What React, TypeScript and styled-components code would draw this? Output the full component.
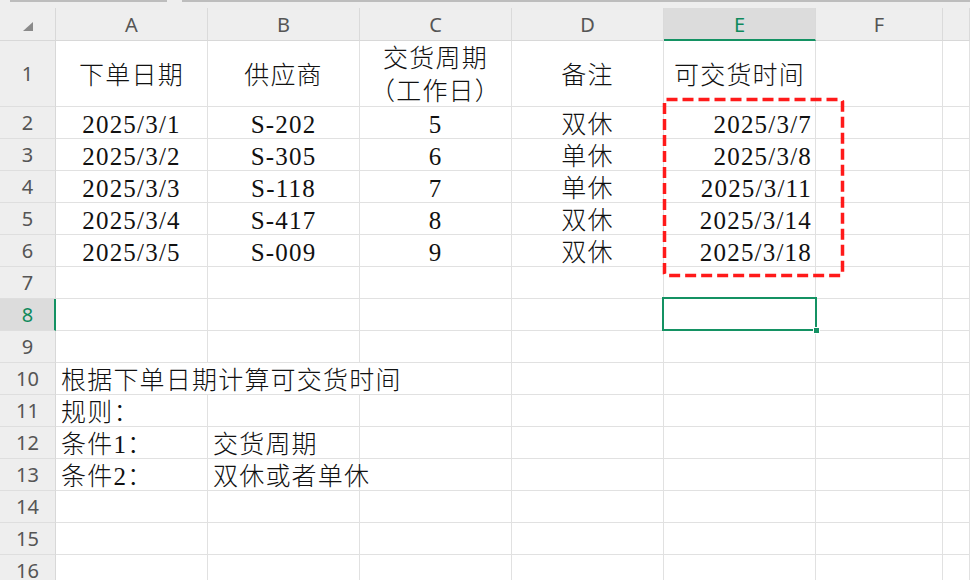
import React from "react";
import styled, { createGlobalStyle, css } from "styled-components";

const GlobalStyle = createGlobalStyle`
  html, body {
    margin: 0;
    padding: 0;
    background: #ffffff;
    overflow: hidden;
  }
`;

const GREEN = "#149263";
const GRID = "#e1e1e1";
const HEAD_BG = "#eeeeee";

const Sheet = styled.div`
  position: relative;
  width: 970px;
  height: 580px;
  overflow: hidden;
  background: #fff;
`;

const TopStrip = styled.div`
  height: 8px;
  background: ${HEAD_BG};
  display: flex;
  align-items: flex-start;
`;

const TabEdge = styled.div<{ $w: number; $gap?: boolean }>`
  width: ${(p) => p.$w}px;
  flex: ${(p) => (p.$w ? "none" : "1")};
  height: 2px;
  background: ${(p) => (p.$gap ? "transparent" : "#bdbdbd")};
`;

const Grid = styled.div`
  display: grid;
  grid-template-columns: 56px repeat(5, 152px) 127px 1fr;
  grid-template-rows: 33px 66px;
  grid-auto-rows: 32px;
`;

const headBase = css`
  box-sizing: border-box;
  display: flex;
  align-items: center;
  justify-content: center;
  font-family: "Noto Sans", "Open Sans", sans-serif;
  font-size: 20px;
  color: #555;
  background: ${HEAD_BG};
`;

const Corner = styled.div`
  ${headBase};
  border-right: 1px solid #d8d8d8;
  border-bottom: 1px solid #d8d8d8;

  &::after {
    content: "";
    width: 0;
    height: 0;
    margin-top: 4px;
    border-left: 10px solid transparent;
    border-bottom: 9px solid #8a8a8a;
  }
`;

const ColHeader = styled.div<{ $active?: boolean }>`
  ${headBase};
  border-right: 1px solid #dadada;
  border-bottom: ${(p) => (p.$active ? `2px solid ${GREEN}` : "1px solid #d8d8d8")};
  background: ${(p) => (p.$active ? "#dcdcdc" : HEAD_BG)};
  color: ${(p) => (p.$active ? "#0f8a5c" : "#555")};
  padding-top: ${(p) => (p.$active ? "1px" : "0")};
`;

const RowHeader = styled.div<{ $active?: boolean }>`
  ${headBase};
  border-bottom: 1px solid #dedede;
  border-right: ${(p) => (p.$active ? `2px solid ${GREEN}` : "1px solid #d8d8d8")};
  background: ${(p) => (p.$active ? "#dcdcdc" : HEAD_BG)};
  color: ${(p) => (p.$active ? "#0f8a5c" : "#555")};
  padding-left: ${(p) => (p.$active ? "1px" : "0")};
`;

const Cell = styled.div<{ $align?: "left" | "center" | "right"; $span?: number; $selected?: boolean }>`
  position: relative;
  box-sizing: border-box;
  display: flex;
  align-items: center;
  justify-content: ${(p) =>
    p.$align === "left" ? "flex-start" : p.$align === "right" ? "flex-end" : "center"};
  padding: ${(p) => (p.$align === "left" ? "3px 0 0 5px" : p.$align === "right" ? "3px 3px 0 0" : "3px 0 0 0")};
  grid-column: ${(p) => (p.$span ? `span ${p.$span}` : "auto")};
  border-right: 1px solid ${GRID};
  border-bottom: 1px solid ${GRID};
  font-family: "Liberation Serif", "Noto Sans CJK SC", serif;
  font-weight: 300;
  font-size: 25px;
  letter-spacing: 1.2px;
  color: #111;
  white-space: nowrap;
  text-align: center;
  line-height: 33px;

  ${(p) =>
    p.$selected &&
    css`
      z-index: 2;
      &::after {
        content: "";
        position: absolute;
        left: -2px;
        top: -2px;
        right: -2px;
        bottom: -1px;
        border: 2px solid ${GREEN};
      }
      &::before {
        content: "";
        position: absolute;
        right: -5px;
        bottom: -4px;
        width: 5px;
        height: 5px;
        background: ${GREEN};
        border: 1px solid #fff;
        z-index: 3;
      }
    `}
`;

const Marker = styled.svg`
  position: absolute;
  left: 662px;
  top: 97px;
  pointer-events: none;
  z-index: 4;
`;

const columns = ["A", "B", "C", "D", "E", "F", ""];

const rows: string[][] = [
  ["2025/3/1", "S-202", "5", "双休", "2025/3/7"],
  ["2025/3/2", "S-305", "6", "单休", "2025/3/8"],
  ["2025/3/3", "S-118", "7", "单休", "2025/3/11"],
  ["2025/3/4", "S-417", "8", "双休", "2025/3/14"],
  ["2025/3/5", "S-009", "9", "双休", "2025/3/18"],
];

const Empty = () => (
  <>
    {columns.map((_, i) => (
      <Cell key={i} />
    ))}
  </>
);

export default function App() {
  return (
    <Sheet>
      <GlobalStyle />
      <TopStrip>
        <TabEdge $w={10} $gap />
        <TabEdge $w={157} />
        <TabEdge $w={15} $gap />
        <TabEdge $w={0} />
      </TopStrip>
      <Grid>
        <Corner />
        {columns.map((c, i) => (
          <ColHeader key={i} $active={c === "E"}>
            {c}
          </ColHeader>
        ))}

        <RowHeader>1</RowHeader>
        <Cell>下单日期</Cell>
        <Cell>供应商</Cell>
        <Cell>
          交货周期
          <br />
          （工作日）
        </Cell>
        <Cell>备注</Cell>
        <Cell>可交货时间</Cell>
        <Cell />
        <Cell />

        {rows.map((r, i) => (
          <React.Fragment key={i}>
            <RowHeader>{i + 2}</RowHeader>
            <Cell>{r[0]}</Cell>
            <Cell>{r[1]}</Cell>
            <Cell>{r[2]}</Cell>
            <Cell>{r[3]}</Cell>
            <Cell $align="right">{r[4]}</Cell>
            <Cell />
            <Cell />
          </React.Fragment>
        ))}

        <RowHeader>7</RowHeader>
        <Empty />

        <RowHeader $active>8</RowHeader>
        <Cell />
        <Cell />
        <Cell />
        <Cell />
        <Cell $selected />
        <Cell />
        <Cell />

        <RowHeader>9</RowHeader>
        <Empty />

        <RowHeader>10</RowHeader>
        <Cell $align="left" $span={3}>
          根据下单日期计算可交货时间
        </Cell>
        <Cell />
        <Cell />
        <Cell />
        <Cell />

        <RowHeader>11</RowHeader>
        <Cell $align="left">规则：</Cell>
        <Cell />
        <Cell />
        <Cell />
        <Cell />
        <Cell />
        <Cell />

        <RowHeader>12</RowHeader>
        <Cell $align="left">条件1：</Cell>
        <Cell $align="left">交货周期</Cell>
        <Cell />
        <Cell />
        <Cell />
        <Cell />
        <Cell />

        <RowHeader>13</RowHeader>
        <Cell $align="left">条件2：</Cell>
        <Cell $align="left">双休或者单休</Cell>
        <Cell />
        <Cell />
        <Cell />
        <Cell />
        <Cell />

        <RowHeader>14</RowHeader>
        <Empty />
        <RowHeader>15</RowHeader>
        <Empty />
        <RowHeader>16</RowHeader>
        <Empty />
      </Grid>
      <Marker width="184" height="182">
        <rect
          x="2.5"
          y="2.5"
          width="178"
          height="176"
          rx="2"
          fill="none"
          stroke="#ff1a1a"
          strokeWidth="3.5"
          strokeDasharray="11 5"
        />
      </Marker>
    </Sheet>
  );
}
